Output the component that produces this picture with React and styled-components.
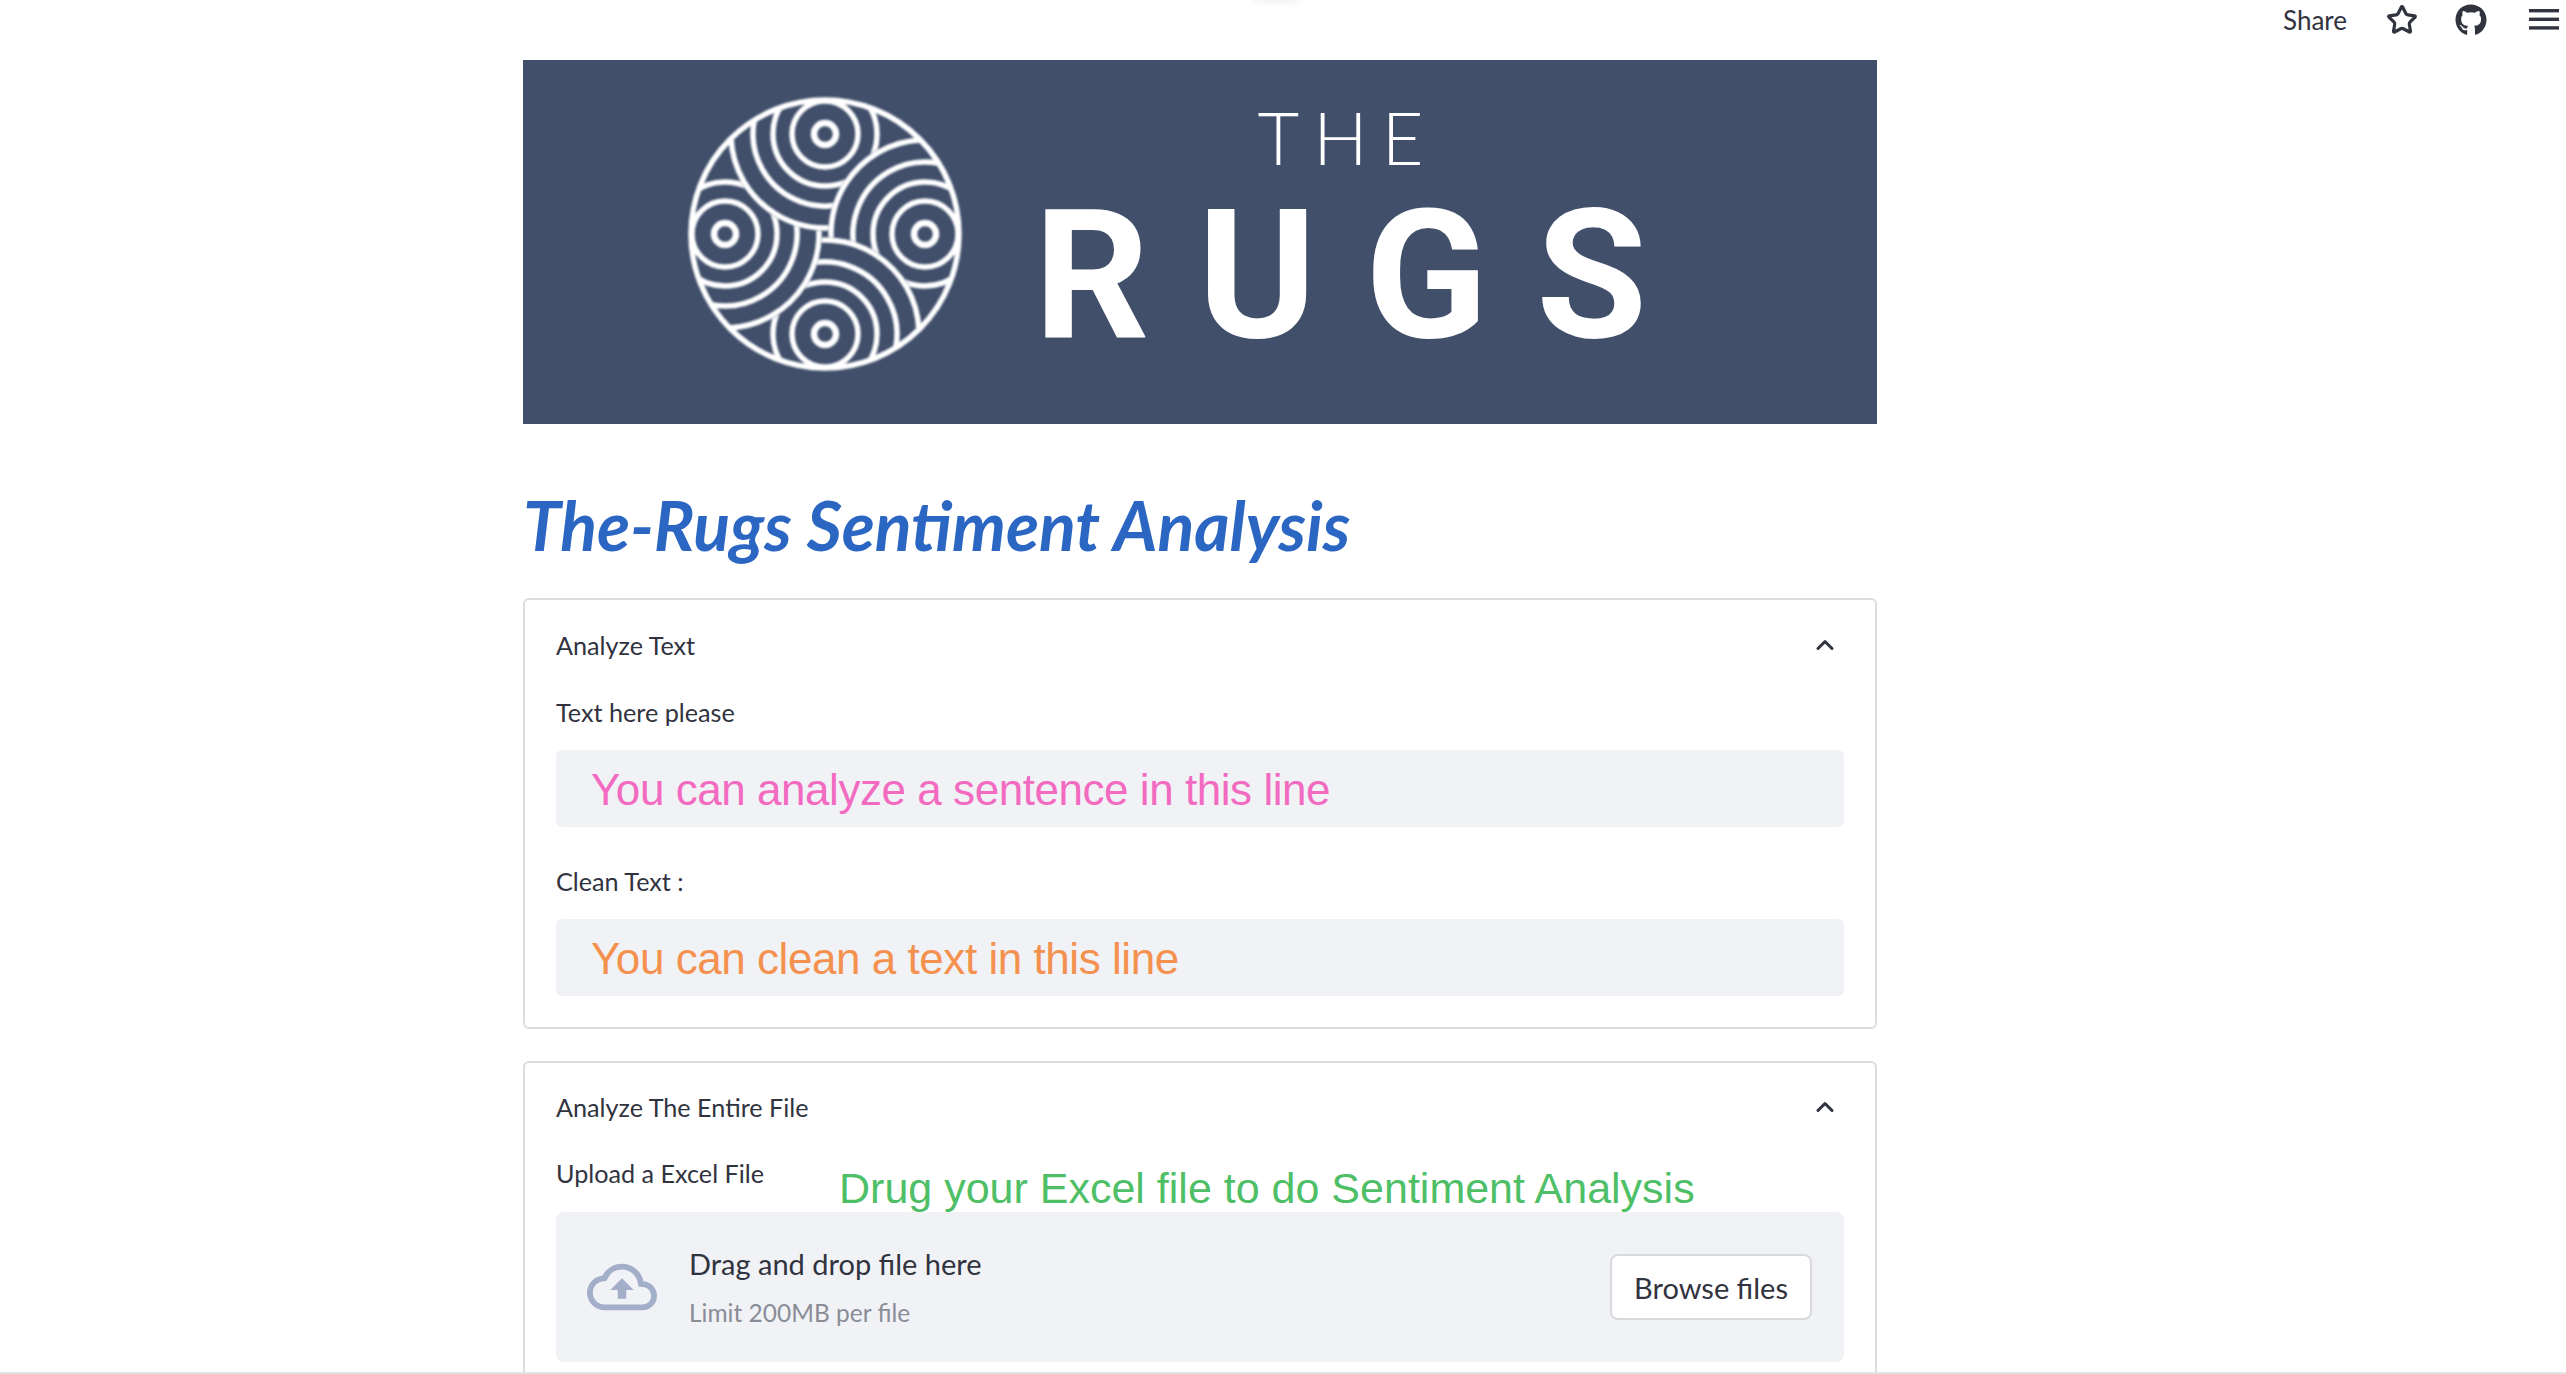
import React from "react";
import styled, { createGlobalStyle } from "styled-components";
import { Star, ChevronUp } from "lucide-react";
import { FaGithub } from "react-icons/fa";
import { MdOutlineCloudUpload } from "react-icons/md";

const GlobalStyle = createGlobalStyle`
  html, body {
    margin: 0;
    padding: 0;
    background: #fff;
    overflow: hidden;
  }
  body {
    height: 1374px;
    font-family: Lato, "Noto Sans", sans-serif;
    color: #31333f;
  }
`;

const Page = styled.div`
  position: relative;
  height: 1374px;
  overflow: hidden;
  border-bottom: 2px solid #e4e4e6;
  box-sizing: border-box;
`;

const Header = styled.header`
  height: 60px;
  display: flex;
  justify-content: flex-end;
  align-items: flex-start;
  padding: 2px 4px 0 0;
  box-sizing: border-box;
`;

const ShareLabel = styled.span`
  font-size: 26px;
  line-height: 36px;
  margin-right: 37px;
`;

const HeaderIcon = styled.span`
  width: 36px;
  height: 36px;
  display: flex;
  align-items: center;
  justify-content: center;
  margin-right: ${(p) => p.$gap}px;
`;

const Main = styled.main`
  width: 1354px;
  margin-left: 523px;
`;

const Banner = styled.div`
  height: 364px;
  background: #414f6b;
  display: flex;
  align-items: center;
  padding-left: 162px;
  box-sizing: border-box;
`;

const LogoMark = styled.svg`
  width: 280px;
  height: 280px;
  margin-top: -16px;
  filter: blur(1px);
`;

const Wordmark = styled.div`
  display: flex;
  flex-direction: column;
  align-items: center;
  margin-left: 69px;
  margin-top: -17px;
  color: #fff;
  filter: blur(0.7px);
`;

const WordThe = styled.span`
  font-family: Lato, sans-serif;
  font-weight: 300;
  font-size: 72px;
  line-height: 72px;
  letter-spacing: 14px;
  margin-right: -14px;
`;

const WordRugs = styled.span`
  font-family: Roboto, sans-serif;
  font-weight: 700;
  font-size: 180px;
  line-height: 180px;
  letter-spacing: 48.5px;
  margin-right: -48.5px;
  margin-top: 13px;
`;

const Title = styled.h1`
  margin: 61px 0 33px;
  font-family: Lato, sans-serif;
  font-style: italic;
  font-weight: 700;
  font-size: 68px;
  line-height: 80px;
  color: #2b66c3;
`;

const Card = styled.section`
  border: 2px solid #dcdcde;
  border-radius: 6px;
  padding: 0 31px;
  height: ${(p) => p.$height};
  margin-bottom: ${(p) => p.$gap || 0}px;
  box-sizing: border-box;
`;

const CardHeader = styled.div`
  height: ${(p) => p.$height}px;
  display: flex;
  align-items: center;
  justify-content: space-between;
  font-size: 25.2px;
`;

const Chevron = styled(ChevronUp)`
  width: 28px;
  height: 28px;
  margin-right: 5px;
  stroke-width: 2.6;
`;

const FieldLabel = styled.div`
  margin-top: 4px;
  font-size: 25.2px;
  line-height: 36px;
`;

const TextField = styled.div`
  height: 77px;
  margin: 20px 0 36px;
  padding: 3px 0 0 35px;
  display: flex;
  align-items: center;
  background: #f0f2f6;
  border-radius: 6px;
  box-sizing: border-box;
  font-family: "Liberation Sans", Arial, sans-serif;
  font-size: 44px;
  letter-spacing: -0.45px;
  color: ${(p) => p.$color};
`;

const UploadRow = styled.div`
  height: 52px;
  display: flex;
  align-items: flex-start;
`;

const DragHint = styled.span`
  margin: 12px 0 0 75px;
  font-family: "Liberation Sans", Arial, sans-serif;
  font-size: 43px;
  line-height: 50px;
  color: #4fbf67;
  white-space: nowrap;
`;

const Dropzone = styled.div`
  height: 150px;
  margin-top: 9px;
  padding: 0 32px 0 31px;
  display: flex;
  align-items: center;
  background: #f0f2f6;
  border-radius: 8px;
`;

const CloudIcon = styled(MdOutlineCloudUpload)`
  width: 70px;
  height: 70px;
  color: #a3aec8;
  flex: none;
`;

const DropText = styled.div`
  flex: 1;
  margin-left: 32px;
  display: flex;
  flex-direction: column;
  gap: 15px;
`;

const DropTitle = styled.span`
  font-size: 29px;
  line-height: 36px;
`;

const DropLimit = styled.span`
  font-size: 24.5px;
  line-height: 32px;
  color: #8a8d96;
`;

const BrowseButton = styled.button`
  width: 202px;
  height: 66px;
  padding: 0;
  background: #fff;
  border: 2px solid #d8dade;
  border-radius: 8px;
  font-family: Lato, sans-serif;
  font-size: 29px;
  color: #31333f;
`;

const TopNub = styled.div`
  position: absolute;
  top: -10px;
  left: 1250px;
  width: 54px;
  height: 13px;
  border-radius: 50%;
  background: #f0f0f0;
  filter: blur(3px);
`;

// one swirl is drawn for the top eye, the other three are rotations of it
const ringRadii = [33, 52];
const armRadii = [72, 94];

const arc = (r) => {
  const from = (30 * Math.PI) / 180;
  const x = (a) => (r * Math.cos(a)).toFixed(2);
  const y = (a) => (-100 + r * Math.sin(a)).toFixed(2);
  return `M ${x(from)} ${y(from)} A ${r} ${r} 0 1 1 0 ${-100 - r}`;
};

function Logo() {
  return (
    <LogoMark viewBox="-140 -140 280 280" fill="none" stroke="#fff">
      <defs>
        <clipPath id="disc">
          <circle r="134" />
        </clipPath>
        <mask id="behindNext" maskUnits="userSpaceOnUse" x="-140" y="-140" width="280" height="280">
          <rect x="-140" y="-140" width="280" height="280" fill="#fff" stroke="none" />
          <circle cx="100" cy="0" r="97" fill="#000" stroke="none" />
        </mask>
      </defs>
      <g clipPath="url(#disc)">
        {[0, 90, 180, 270].map((angle) => (
          <g key={angle} transform={`rotate(${angle})`}>
            <g mask="url(#behindNext)" strokeWidth="5.5">
              <circle cy="-100" r="11" strokeWidth="6.5" />
              {ringRadii.map((r) => (
                <circle key={r} cy="-100" r={r} />
              ))}
              {armRadii.map((r) => (
                <path key={r} d={arc(r)} />
              ))}
            </g>
          </g>
        ))}
      </g>
      <circle r="134" strokeWidth="5.5" />
    </LogoMark>
  );
}

function MenuGlyph() {
  return (
    <svg width="32" height="24" viewBox="0 0 32 24" fill="#31333f">
      <rect x="1" y="1" width="30" height="3.4" />
      <rect x="1" y="9.6" width="30" height="3.4" />
      <rect x="1" y="18.2" width="30" height="3.4" />
    </svg>
  );
}

export default function App() {
  return (
    <Page>
      <GlobalStyle />
      <TopNub />
      <Header>
        <ShareLabel>Share</ShareLabel>
        <HeaderIcon $gap={33}>
          <Star size={32} strokeWidth={2.4} />
        </HeaderIcon>
        <HeaderIcon $gap={37}>
          <FaGithub size={32} />
        </HeaderIcon>
        <HeaderIcon $gap={0}>
          <MenuGlyph />
        </HeaderIcon>
      </Header>
      <Main>
        <Banner>
          <Logo />
          <Wordmark>
            <WordThe>THE</WordThe>
            <WordRugs>RUGS</WordRugs>
          </Wordmark>
        </Banner>
        <Title>The-Rugs Sentiment Analysis</Title>
        <Card $height="431px" $gap={32}>
          <CardHeader $height={90}>
            Analyze Text
            <Chevron />
          </CardHeader>
          <FieldLabel>Text here please</FieldLabel>
          <TextField $color="#f26bc0">You can analyze a sentence in this line</TextField>
          <FieldLabel>Clean Text :</FieldLabel>
          <TextField $color="#f4914f">You can clean a text in this line</TextField>
        </Card>
        <Card $height="360px">
          <CardHeader $height={88}>
            Analyze The Entire File
            <Chevron />
          </CardHeader>
          <UploadRow>
            <FieldLabel>Upload a Excel File</FieldLabel>
            <DragHint>Drug your Excel file to do Sentiment Analysis</DragHint>
          </UploadRow>
          <Dropzone>
            <CloudIcon />
            <DropText>
              <DropTitle>Drag and drop file here</DropTitle>
              <DropLimit>Limit 200MB per file</DropLimit>
            </DropText>
            <BrowseButton>Browse files</BrowseButton>
          </Dropzone>
        </Card>
      </Main>
    </Page>
  );
}
